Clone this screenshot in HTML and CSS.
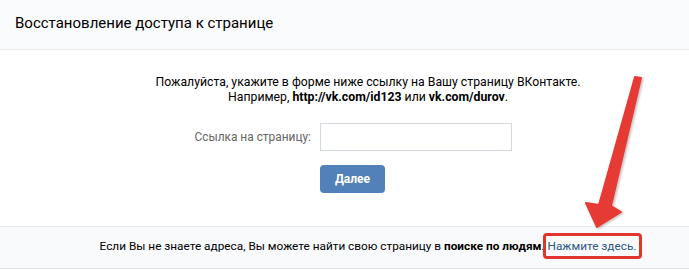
FILE: index.html
```html
<!DOCTYPE html>
<html lang="ru">
<head>
<meta charset="utf-8">
<title>Восстановление доступа к странице</title>
<link rel="stylesheet" href="styles.css">
</head>
<body>
<div class="page">
  <div class="header">Восстановление доступа к странице</div>
  <div class="content">
    <p class="intro">Пожалуйста, укажите в форме ниже ссылку на Вашу страницу ВКонтакте.<br>Например, <b>http://vk.com/id123</b> или <b>vk.com/durov</b>.</p>
    <div class="form">
      <label class="label" for="link">Ссылка на страницу:</label>
      <input class="input" id="link" type="text">
      <span></span>
      <button class="button" type="button">Далее</button>
    </div>
  </div>
  <div class="footer">Если Вы не знаете адреса, Вы можете найти свою страницу в <b>поиске по людям</b>. <a class="link" href="#">Нажмите здесь.</a></div>
  <svg class="arrow" width="689" height="270" viewBox="0 0 689 270">
    <defs>
      <filter id="sh" x="-20%" y="-20%" width="140%" height="140%">
        <feDropShadow dx="1.5" dy="1" stdDeviation="0.8" flood-color="#000" flood-opacity="0.25"/>
      </filter>
    </defs>
    <polygon filter="url(#sh)" points="635,77 641,78 611,206 621,212 597,227 586,203 599,205" fill="#e63b35" stroke="#e63b35" stroke-width="2" stroke-linejoin="round"/>
  </svg>
</div>
</body>
</html>
```

FILE: styles.css
```css
body {
  margin: 0;
  background: #fff;
  font-family: Roboto, "Open Sans", Arial, sans-serif;
  font-size: 12.25px;
  line-height: 15px;
  color: #000;
}
.page {
  position: relative;
  width: 689px;
  height: 270px;
  overflow: hidden;
}
.header {
  box-sizing: border-box;
  height: 50px;
  border-bottom: 1px solid #e7e8ec;
  background: #fafbfc;
  display: flex;
  align-items: center;
  padding: 0 0 2px 15px;
  font-size: 15px;
  color: #000;
}
.content {
  padding: 25px 0 33px 47px;
}
.intro {
  margin: 0 0 18px;
  text-align: center;
}
.form {
  display: grid;
  grid-template-columns: 161px 192px;
  column-gap: 9px;
  row-gap: 14px;
  padding-left: 103px;
  align-items: center;
}
.label {
  text-align: right;
  font-size: 11.9px;
  color: #656565;
}
.input {
  box-sizing: border-box;
  width: 192px;
  height: 28px;
  margin: 0;
  border: 1px solid #d3d9de;
  border-radius: 0;
  background: #fff;
}
.button {
  width: 65px;
  height: 28px;
  margin: 0;
  border: 0;
  border-radius: 4px;
  background: #5181b8;
  color: #fff;
  font-family: inherit;
  font-size: 12px;
  font-weight: bold;
  padding: 0;
}
.footer {
  border-top: 1px solid #e7e8ec;
  border-bottom: 1px solid #dce1e6;
  background: #f9fafb;
  padding: 12px 0 14px 47px;
  font-size: 11.8px;
  text-align: center;
}
.link {
  position: relative;
  color: #2a5885;
  text-decoration: none;
}
.link::after {
  content: "";
  position: absolute;
  left: -5px;
  right: -6px;
  top: -6px;
  bottom: -6px;
  border: 3px solid #e0342f;
  border-radius: 4px;
}
.arrow {
  position: absolute;
  left: 0;
  top: 0;
  pointer-events: none;
}
```
